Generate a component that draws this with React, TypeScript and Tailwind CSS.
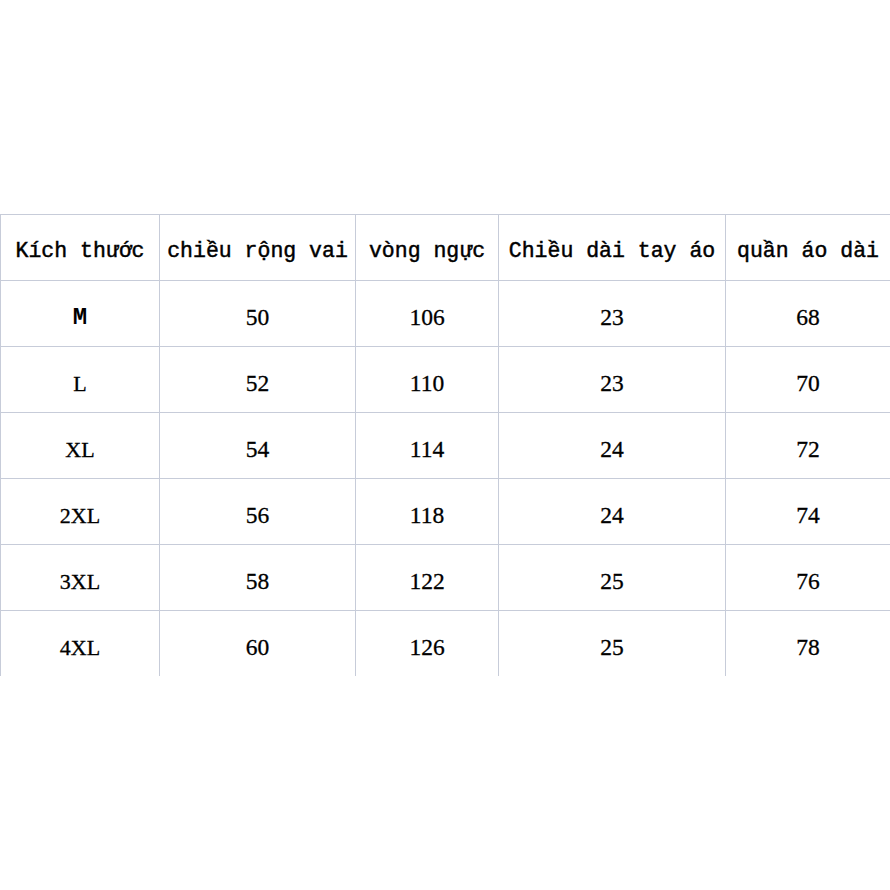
const headers = [
  "Kích thước",
  "chiều rộng vai",
  "vòng ngực",
  "Chiều dài tay áo",
  "quần áo dài",
];

const rows = [
  ["M", "50", "106", "23", "68"],
  ["L", "52", "110", "23", "70"],
  ["XL", "54", "114", "24", "72"],
  ["2XL", "56", "118", "24", "74"],
  ["3XL", "58", "122", "25", "76"],
  ["4XL", "60", "126", "25", "78"],
];

export default function App() {
  return (
    <div className="flex h-[890px] w-[890px] items-center bg-white text-black">
      <div className="grid w-[890px] grid-cols-[159px_196px_143px_227px_165px] auto-rows-[66px]">
        {headers.map((h) => (
          <div
            key={h}
            className="flex items-center justify-center whitespace-nowrap border-l border-t border-[#c7ccd9] pt-2 font-['Liberation_Mono',monospace] text-[21.5px] [-webkit-text-stroke:0.45px_black]"
          >
            {h}
          </div>
        ))}
        {rows.map((row) =>
          row.map((cell, i) => (
            <div
              key={row[0] + i}
              className={
                "flex items-center justify-center border-l border-t border-[#c7ccd9] pt-2 " +
                (cell === "M"
                  ? "font-['Liberation_Mono',monospace] text-[24px] font-bold"
                  : i === 0
                    ? "font-['Liberation_Serif',serif] text-[22px] [-webkit-text-stroke:0.3px_black]"
                    : "font-['Liberation_Serif',serif] text-[23.5px] [-webkit-text-stroke:0.3px_black]")
              }
            >
              {cell}
            </div>
          ))
        )}
      </div>
    </div>
  );
}
